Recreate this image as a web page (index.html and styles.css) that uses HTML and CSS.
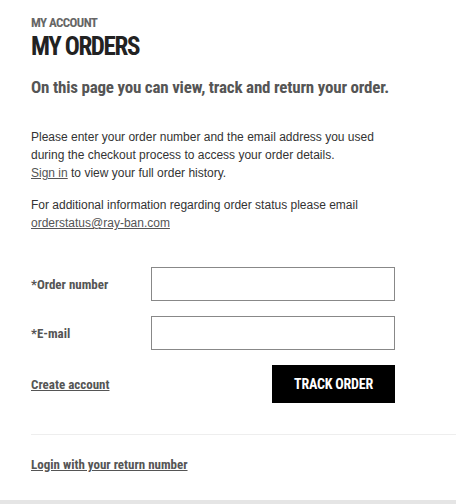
FILE: index.html
```html
<!DOCTYPE html>
<html>
<head>
<meta charset="utf-8">
<link rel="stylesheet" href="styles.css">
</head>
<body>
<main class="page">
  <header class="head">
    <div class="eyebrow">MY ACCOUNT</div>
    <h1 class="title">MY ORDERS</h1>
    <p class="lead">On this page you can view, track and return your order.</p>
  </header>
  <section class="info">
    <p>Please enter your order number and the email address you used<br>during the checkout process to access your order details.<br><a href="#">Sign in</a> to view your full order history.</p>
    <p>For additional information regarding order status please email<br><a href="#">orderstatus@ray-ban.com</a></p>
  </section>
  <form class="form">
    <div class="row">
      <label class="label" for="ord">*Order number</label>
      <input class="field" id="ord" type="text">
    </div>
    <div class="row">
      <label class="label" for="mail">*E-mail</label>
      <input class="field" id="mail" type="text">
    </div>
    <div class="actions">
      <a class="cond-link" href="#">Create account</a>
      <button class="btn" type="button">TRACK ORDER</button>
    </div>
  </form>
  <div class="divider"></div>
  <a class="cond-link return" href="#">Login with your return number</a>
</main>
<div class="footer-bar"></div>
</body>
</html>
```
FILE: styles.css
```css
html, body {
  margin: 0;
  padding: 0;
  background: #fff;
}
body {
  width: 456px;
  height: 504px;
  overflow: hidden;
  display: flex;
  flex-direction: column;
  font-family: "Liberation Sans", Arial, sans-serif;
}
.page {
  flex: 1;
  padding: 15px 0 0 31px;
  --cond: "Liberation Sans Narrow", "Roboto Condensed", "DejaVu Sans Condensed", sans-serif;
}
.eyebrow {
  font-family: var(--cond);
  font-weight: bold;
  font-size: 13px;
  letter-spacing: -0.6px;
  line-height: 16px;
  color: #666;
}
.title {
  margin: 2px 0 0;
  font-family: var(--cond);
  font-weight: bold;
  font-size: 25px;
  letter-spacing: -1.4px;
  line-height: 28px;
  color: #222;
}
.lead {
  margin: 16px 0 0;
  font-family: var(--cond);
  font-weight: bold;
  font-size: 17px;
  letter-spacing: -0.2px;
  line-height: 20px;
  color: #555;
}
.info {
  margin-top: 31px;
  font-size: 12px;
  line-height: 18px;
  color: #333;
}
.info p {
  margin: 0 0 14px;
}
.info a {
  color: #555;
  text-decoration: underline;
}
.form {
  margin-top: 35px;
  width: 364px;
}
.row {
  display: flex;
  align-items: center;
  justify-content: space-between;
  margin-bottom: 15px;
}
.label {
  font-family: var(--cond);
  font-weight: bold;
  font-size: 13px;
  color: #555;
}
.field {
  box-sizing: border-box;
  width: 244px;
  height: 34px;
  margin: 0;
  border: 1px solid #888;
  border-radius: 0;
  background: #fff;
}
.actions {
  display: flex;
  align-items: center;
  justify-content: space-between;
  margin-top: 15px;
}
.cond-link {
  font-family: var(--cond);
  font-weight: bold;
  font-size: 13px;
  color: #555;
  text-decoration: underline;
}
.btn {
  width: 123px;
  height: 38px;
  margin: 0;
  border: 0;
  background: #000;
  color: #fff;
  font-family: var(--cond);
  font-weight: bold;
  font-size: 14px;
  letter-spacing: -0.2px;
  padding: 0;
}
.divider {
  margin-top: 31px;
  height: 1px;
  background: #eee;
}
.return {
  display: inline-block;
  margin-top: 22px;
}
.footer-bar {
  height: 4px;
  background: #e5e5e5;
}
```
